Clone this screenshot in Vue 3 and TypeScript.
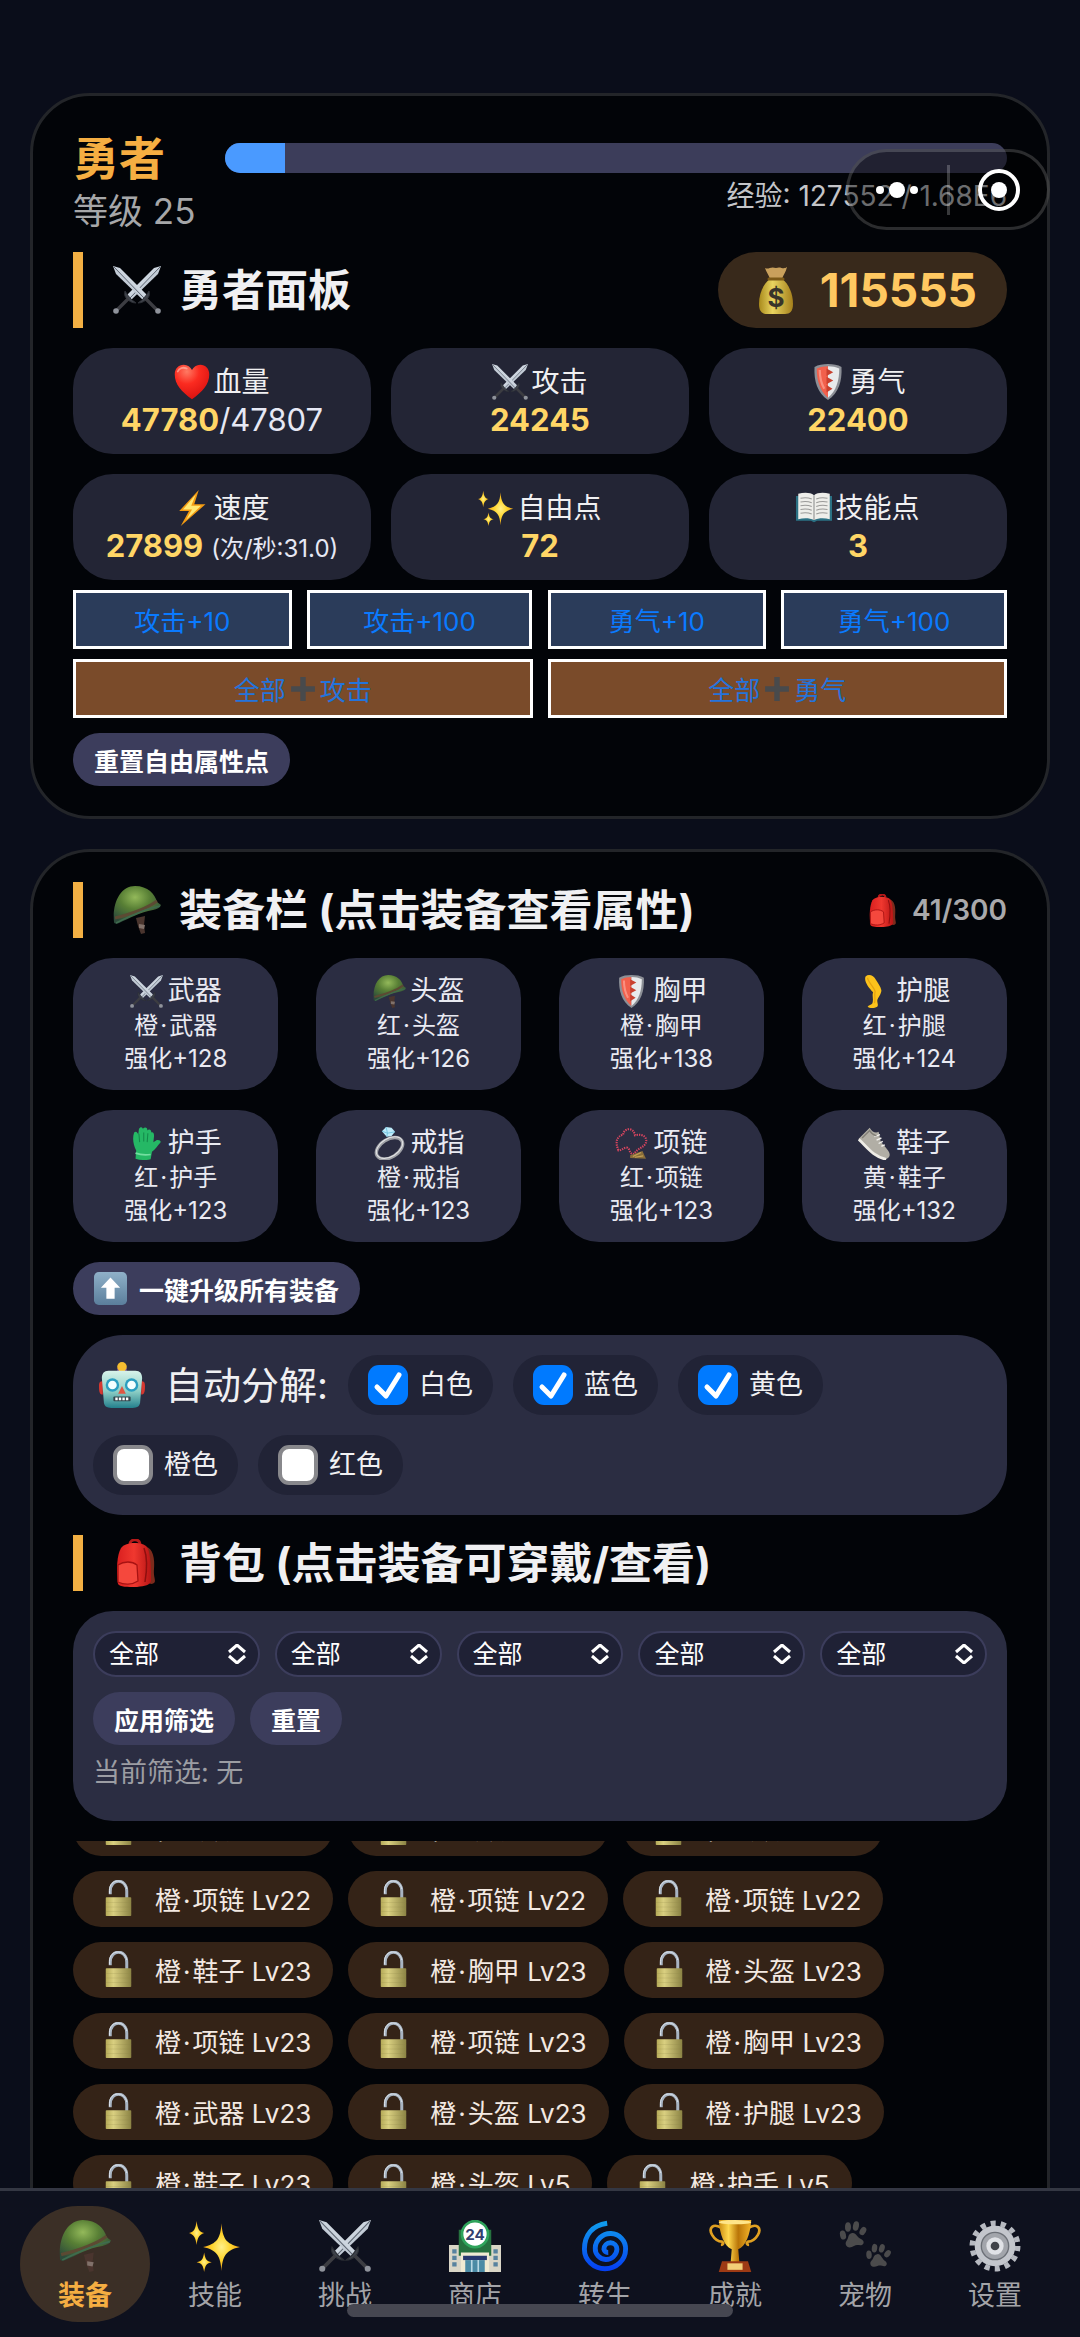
<script setup lang="ts">
import { onMounted, ref } from 'vue'

interface Stat {
  icon: string
  label: string
  value: string
  suffix?: string
  note?: string
}

interface Slot {
  icon: string
  label: string
  tier: string
  level: number
}

const exp = { percent: 7.6, text: '经验: 127552 / 1.68E6' }

const stats: Stat[] = [
  { icon: 'heart', label: '血量', value: '47780', suffix: '/47807' },
  { icon: 'swords', label: '攻击', value: '24245' },
  { icon: 'shield', label: '勇气', value: '22400' },
  { icon: 'bolt', label: '速度', value: '27899', note: '(次/秒:31.0)' },
  { icon: 'sparkles', label: '自由点', value: '72' },
  { icon: 'book', label: '技能点', value: '3' },
]

const pointGroups = [
  { name: '攻击', steps: [10, 100] },
  { name: '勇气', steps: [10, 100] },
]

const slots: Slot[] = [
  { icon: 'swords', label: '武器', tier: '橙', level: 128 },
  { icon: 'helmet', label: '头盔', tier: '红', level: 126 },
  { icon: 'shield', label: '胸甲', tier: '橙', level: 138 },
  { icon: 'leg', label: '护腿', tier: '红', level: 124 },
  { icon: 'glove', label: '护手', tier: '红', level: 123 },
  { icon: 'ring', label: '戒指', tier: '橙', level: 123 },
  { icon: 'beads', label: '项链', tier: '红', level: 123 },
  { icon: 'shoe', label: '鞋子', tier: '黄', level: 132 },
]

const autoSell = ref([
  { label: '白色', on: true },
  { label: '蓝色', on: true },
  { label: '黄色', on: true },
  { label: '橙色', on: false },
  { label: '红色', on: false },
])

const filters = ref(['全部', '全部', '全部', '全部', '全部'])

const bag: string[] = [
  '项链 Lv22', '项链 Lv22', '项链 Lv22',
  '项链 Lv22', '项链 Lv22', '项链 Lv22',
  '鞋子 Lv23', '胸甲 Lv23', '头盔 Lv23',
  '项链 Lv23', '项链 Lv23', '胸甲 Lv23',
  '武器 Lv23', '头盔 Lv23', '护腿 Lv23',
  '鞋子 Lv23', '头盔 Lv5', '护手 Lv5',
]

const tabs = [
  { icon: 'helmet', label: '装备' },
  { icon: 'sparkles', label: '技能' },
  { icon: 'swords', label: '挑战' },
  { icon: 'shop', label: '商店' },
  { icon: 'cyclone', label: '转生' },
  { icon: 'trophy', label: '成就' },
  { icon: 'paws', label: '宠物' },
  { icon: 'gear', label: '设置' },
]
const activeTab = ref('装备')

const bagList = ref<HTMLElement | null>(null)
onMounted(() => {
  if (bagList.value) bagList.value.scrollTop = 41
})
</script>

<template>
  <svg class="sprite" aria-hidden="true">
    <defs>
      <linearGradient id="g-blade" x1="0" y1="1" x2="1" y2="0">
        <stop offset="0" stop-color="#7e8894" /><stop offset=".5" stop-color="#c9d2dc" /><stop offset="1" stop-color="#f4f7fa" />
      </linearGradient>
      <radialGradient id="g-helmet" cx=".45" cy=".3" r=".7">
        <stop offset="0" stop-color="#93b95a" /><stop offset=".45" stop-color="#587f35" /><stop offset="1" stop-color="#2c4a3a" />
      </radialGradient>
      <radialGradient id="g-heart" cx=".35" cy=".2" r=".9">
        <stop offset="0" stop-color="#ff7a63" /><stop offset=".4" stop-color="#fb2b20" /><stop offset="1" stop-color="#d30d0d" />
      </radialGradient>
      <linearGradient id="g-gold" x1="0" x2="1">
        <stop offset="0" stop-color="#c98a10" /><stop offset=".3" stop-color="#ffd84d" /><stop offset=".6" stop-color="#b97508" /><stop offset="1" stop-color="#f4b52b" />
      </linearGradient>
      <linearGradient id="g-bag" x1="0" x2="1">
        <stop offset="0" stop-color="#a98a1c" /><stop offset=".4" stop-color="#e9d460" /><stop offset="1" stop-color="#a5801c" />
      </linearGradient>
      <linearGradient id="g-lock" x1="0" x2="1">
        <stop offset="0" stop-color="#b5aa58" /><stop offset=".3" stop-color="#d9cf80" /><stop offset="1" stop-color="#8b8344" />
      </linearGradient>
      <linearGradient id="g-robot" x1="0" y1="0" x2="0" y2="1">
        <stop offset="0" stop-color="#d8f3ea" /><stop offset=".55" stop-color="#8ecfc6" /><stop offset="1" stop-color="#237f8c" />
      </linearGradient>
      <linearGradient id="g-cyclone" x1="0" y1="0" x2="0" y2="1">
        <stop offset="0" stop-color="#109bec" /><stop offset="1" stop-color="#0541f2" />
      </linearGradient>
      <linearGradient id="g-up" x1="0" y1="0" x2="0" y2="1">
        <stop offset="0" stop-color="#8fb0c8" /><stop offset="1" stop-color="#5b7f9c" />
      </linearGradient>
      <linearGradient id="g-red" x1="0" x2="1">
        <stop offset="0" stop-color="#d91f1f" /><stop offset=".5" stop-color="#f0382f" /><stop offset="1" stop-color="#b81515" />
      </linearGradient>
      <radialGradient id="g-star">
        <stop offset="0" stop-color="#fff08a" /><stop offset=".5" stop-color="#ffd52e" /><stop offset="1" stop-color="#f0a417" />
      </radialGradient>
      <g id="p-sword">
        <path d="M0 0 7 2 34 29 30 34 3 8Z" fill="url(#g-blade)" />
        <path d="M1 1 31 32" stroke="#5c6470" stroke-width="1" />
        <path d="M36 25c1 4 0 6-2 8s-5 4-9 4c2-2 3-2 5-4s4-5 6-8Z" fill="#3f434b" stroke="#2c2f35" stroke-width="1" />
        <path d="m33 33 11 11" stroke="#3c3d42" stroke-width="3.400" />
        <circle cx="45" cy="45" r="2.800" fill="#8f939b" />
      </g>
      <g id="p-paw" fill="#4b4b4c">
        <ellipse cx="4" cy="14" rx="3" ry="4.600" transform="rotate(-12 4 14)" />
        <ellipse cx="9" cy="6" rx="3" ry="4.800" />
        <ellipse cx="17" cy="5" rx="3" ry="4.800" transform="rotate(10 17 5)" />
        <ellipse cx="24" cy="10" rx="3" ry="4.400" transform="rotate(30 24 10)" />
        <path d="M13 12c4-1 5 4 9 6s3 5 1 6-5-1-8 1-7 2-8-1 1-4 2-7 1-4 4-5Z" />
      </g>
    </defs>

    <symbol id="i-swords" viewBox="0 0 48 48">
      <use href="#p-sword" transform="translate(48 0) scale(-1 1)" />
      <use href="#p-sword" />
    </symbol>
    <symbol id="i-heart" viewBox="0 0 48 48">
      <path d="M24 47C10 37 1 27 1 14 1 6 6 1 13 1c5 0 9 3 11 7 2-4 6-7 11-7 7 0 12 5 12 13 0 13-9 23-23 33Z" fill="url(#g-heart)" />
      <path d="M5 10c2-5 7-6 12-4" stroke="#ffb5a5" stroke-width="2.500" fill="none" stroke-linecap="round" opacity=".7" />
    </symbol>
    <symbol id="i-shield" viewBox="0 0 48 48">
      <path d="M24 0C31 0 37 1 42 4c1 19-4 35-18 44C10 39 5 23 6 4 11 1 17 0 24 0Z" fill="#8c8f96" />
      <path d="M24 3v42C13 36 9 22 9 6c5-2 9-3 15-3Z" fill="#f2604c" />
      <path d="M24 3v42c11-9 15-23 15-39-5-2-9-3-15-3Z" fill="#e8eaec" />
      <path d="m22 6 9 5-9 5Zm0 11 9 5-9 5Zm0 11 8 5-8 5Z" fill="#c9402f" />
      <path d="M13 8c0 10 2 18 6 25" stroke="#ffb0a4" stroke-width="3" fill="none" opacity=".6" />
    </symbol>
    <symbol id="i-bolt" viewBox="0 0 48 48">
      <path d="M33 0 7 28h13L9 48l33-29H27Z" fill="#f39b12" />
      <path d="M29 6 12 26h12l-8 14 20-19H23Z" fill="#ffe873" />
    </symbol>
    <symbol id="i-sparkles" viewBox="0 0 48 48">
      <g fill="url(#g-star)">
        <path d="M30 3c1 14 4 19 17 22-13 3-16 8-17 22-1-14-4-19-17-22C26 22 29 17 30 3Z" />
        <path d="M7 1c1 7 2 10 7 11-5 2-6 4-7 11-1-7-2-9-7-11 5-1 6-4 7-11Z" />
        <path d="M14 30c1 6 2 8 7 9-5 1-6 3-7 9-1-6-2-8-7-9 5-1 6-3 7-9Z" />
      </g>
    </symbol>
    <symbol id="i-book" viewBox="0 0 48 48">
      <path d="M0 8h48v33H28l-4 2-4-2H0Z" fill="#2b7184" />
      <path d="M3 5c8-2 16-2 21 2v33c-6-3-14-3-21-1ZM45 5c-8-2-16-2-21 2v33c6-3 14-3 21-1Z" fill="#eeeeea" />
      <path d="M6 11c5-1 10-1 15 1M6 16c5-1 10-1 15 1M6 21c5-1 10-1 15 1M6 26c5-1 10-1 15 1M6 31c5-1 10-1 15 1M42 11c-5-1-10-1-15 1M42 16c-5-1-10-1-15 1M42 21c-5-1-10-1-15 1M42 26c-5-1-10-1-15 1M42 31c-5-1-10-1-15 1" stroke="#9a9a98" stroke-width="1.600" fill="none" />
      <path d="M24 7v33" stroke="#a9aaa8" stroke-width="2" />
    </symbol>
    <symbol id="i-plus" viewBox="0 0 48 48">
      <path d="M19 2h10v17h17v10H29v17H19V29H2V19h17Z" fill="#484a4c" />
    </symbol>
    <symbol id="i-money" viewBox="0 0 48 48">
      <path d="M13 2c4 2 5-2 11 0 5-2 7 2 11-1-1 5-4 8-5 12H18c-1-4-4-7-5-11Z" fill="#c9a05c" />
      <path d="M18 13h12c7 5 11 15 11 25 0 7-3 10-8 10H15c-5 0-8-3-8-10 0-10 4-20 11-25Z" fill="url(#g-bag)" />
      <path d="M17 13h14" stroke="#7d5a18" stroke-width="3" stroke-linecap="round" />
    </symbol>
    <symbol id="i-helmet" viewBox="0 0 48 48">
      <path d="m23 32 9-2-1 9 1 8-4 1-3-8Z" fill="#4a352e" />
      <path d="m26 38 6 1-1 4-5-1Z" fill="#81716a" />
      <path d="M1 36C-1 16 8 0 22 0c13 0 20 8 22 16l4 3c-1 3-4 4-8 5-13 2-23 8-34 13-2 1-5 1-5-1Z" fill="url(#g-helmet)" />
      <path d="M2 32c12-3 30-8 42-17" stroke="#5c4a33" stroke-width="3" fill="none" />
      <path d="M3 37c12-6 28-14 44-17" stroke="#3f6b4e" stroke-width="1.600" fill="none" />
    </symbol>
    <symbol id="i-backpack" viewBox="0 0 48 48">
      <path d="M33 8c7 1 9 12 8 22s4 13-2 15l-6-1Z" fill="#7c2b1c" />
      <path d="M17 5c0-5 9-6 10 0" stroke="#b51919" stroke-width="3" fill="none" />
      <path d="M5 45C3 30 4 16 8 9c4-6 21-7 26-1 4 6 4 25 4 34-1 4-6 5-14 6-10 0-17 0-19-3Z" fill="url(#g-red)" />
      <path d="M5 26c6-4 14-4 19 0l1 16c-6 4-14 4-20 1Z" fill="#f5483d" stroke="#a81212" stroke-width="1.300" />
      <path d="M31 9c3 8 3 22 1 34" stroke="#8e0f0f" stroke-width="1.500" fill="none" />
    </symbol>
    <symbol id="i-leg" viewBox="0 0 48 48">
      <path d="M11 2c5-4 12-1 15 5 3 5 7 10 8 15 0 6-5 10-6 15 0 4 2 7 0 9-5 3-12 2-14 0 1-2 6-3 7-5 2-7-1-11 1-16C16 19 8 9 11 2Z" fill="#fcc21b" />
      <path d="M14 4c0 6 9 13 11 20-2 6 1 10-1 17" stroke="#dd970c" stroke-width="1.800" fill="none" opacity=".7" />
    </symbol>
    <symbol id="i-glove" viewBox="0 0 48 48">
      <path d="M6 8c3-3 5 0 6 3l1-8c2-4 6-3 6 1V2c3-3 7-1 6 3 3-3 6-1 6 3 3-1 4 2 4 5l-1 9 5-3c4-1 7 2 5 4-4 4-7 10-12 13l-2 11c-8 2-15 1-22-1l1-12C5 26 3 17 6 8Z" fill="#25b865" />
      <path d="m13 10 1 12m6-14v13m6-12-1 13" stroke="#13884a" stroke-width="1.500" />
      <path d="M8 38c8 3 15 3 22 2" stroke="#73dfa0" stroke-width="2.500" fill="none" />
    </symbol>
    <symbol id="i-ring" viewBox="0 0 48 48">
      <ellipse cx="24" cy="31" rx="21" ry="13" transform="rotate(-32 24 31)" fill="none" stroke="#9fa1a6" stroke-width="5" />
      <ellipse cx="24" cy="30" rx="21" ry="13" transform="rotate(-32 24 30)" fill="none" stroke="#e2e3e5" stroke-width="1.500" />
      <path d="m13 6 6-6 8 1 5 6-5 6-7 1Z" fill="#bdebfa" />
      <path d="m13 6 8 3 11-2m-13-7 2 9-1 5" stroke="#6bbfdc" stroke-width="1.200" fill="none" />
    </symbol>
    <symbol id="i-beads" viewBox="0 0 48 48">
      <path d="M5 34C0 22 2 14 12 11c0-9 15-12 17 1 12-3 20 4 15 13-5 6-11 6-16 14-8 2-6-10-11-9-5 0-6 4-12 4Z" fill="none" stroke="#d8455f" stroke-width="3" stroke-dasharray="2 1.500" />
      <path d="m22 41 18-6 5 11-23-1Z" fill="#896d39" />
      <path d="m26 43 12-6m-9 7 12-2" stroke="#c4a155" stroke-width="1.500" />
    </symbol>
    <symbol id="i-shoe" viewBox="0 0 48 48">
      <path d="M1 17 17 1c4 7 9 8 13 6l3 14 9 11c6 7 5 12 0 14-6 1-16-5-22-12L3 21c-2-1-2-3-2-4Z" fill="#b1aea5" />
      <path d="M1 18c12 11 21 25 40 29" stroke="#eeece6" stroke-width="4" fill="none" />
      <path d="m24 14 8-3m-5 8 7-3m-4 8 6-3m-2 7 5-2" stroke="#f2f1ee" stroke-width="2" />
      <path d="M6 16 17 5c3 6 7 7 10 8" stroke="#827f77" stroke-width="2" fill="none" />
    </symbol>
    <symbol id="i-up" viewBox="0 0 48 48">
      <rect width="48" height="48" rx="7" fill="url(#g-up)" />
      <path d="m24 8 14 15h-8v16H18V23h-8Z" fill="#fff" />
    </symbol>
    <symbol id="i-robot" viewBox="0 0 48 48">
      <path d="M0 25c0-4 1-5 4-5v14c-3 0-4-2-4-9Zm48 0c0-4-1-5-4-5v14c3 0 4-2 4-9Z" fill="#d53830" />
      <path d="M19 6h10v5H19Z" fill="#764a9b" />
      <circle cx="24" cy="5" r="5" fill="#f5bd30" />
      <path d="M10 9h28c5 0 7 3 7 8l-2 24c0 5-3 7-8 7H13c-5 0-8-2-8-7L3 17c0-5 2-8 7-8Z" fill="url(#g-robot)" />
      <circle cx="14" cy="24" r="7" fill="#2a9ec0" /><circle cx="34" cy="24" r="7" fill="#2a9ec0" />
      <circle cx="14" cy="24" r="4.500" fill="#f4ffff" /><circle cx="34" cy="24" r="4.500" fill="#f4ffff" />
      <path d="m24 25 4 8h-8Z" fill="#e05643" />
      <rect x="15" y="36" width="18" height="5" rx="1" fill="#33464d" />
      <path d="M17 38.500h14" stroke="#fff" stroke-width="3" stroke-dasharray="2.500 1.200" />
    </symbol>
    <symbol id="i-lock" viewBox="0 0 36 48">
      <path d="M7 19v-4c0-18 22-18 22 0v9" fill="none" stroke="#a8b4c2" stroke-width="4" />
      <path d="M6 18v-4C6-3 27-2 29 12" fill="none" stroke="#e0e6ee" stroke-width="1.200" />
      <rect x="1" y="23" width="34" height="25" rx="1" fill="url(#g-lock)" />
      <path d="M1 30h34M1 36h34M1 42h34" stroke="#8d8548" stroke-width=".8" opacity=".3" />
    </symbol>
    <symbol id="i-shop" viewBox="0 0 48 48">
      <path d="M0 23h14v25H0ZM34 23h14v25H34Z" fill="#d9d6c7" />
      <path d="M9 9h30v24H9Z" fill="#26713f" />
      <path d="M11 30h26v18H11Z" fill="#f0ead2" />
      <path d="M13 33h22v4H13Z" fill="#28386e" />
      <path d="M15 37h18v11H15Z" fill="#4b8ba5" />
      <path d="M21 37v11m6-11v11" stroke="#b9d9e4" stroke-width="1.500" />
      <path d="M3 27h4v4H3Zm0 6h4v4H3Zm0 6h4v4H3Zm38-12h4v4h-4Zm0 6h4v4h-4Zm0 6h4v4h-4Z" fill="#57829f" />
      <circle cx="24" cy="13" r="12" fill="#fff" stroke="#2ea35b" stroke-width="2.500" />
    </symbol>
    <symbol id="i-cyclone" viewBox="0 0 48 48">
      <path d="M26 3C12 5 5 14 5 27a19 18 0 0 0 38 0 14 14 0 0 0-28-1 10 10 0 0 0 20 1 6 6 0 0 0-12 0 4 4 0 0 0 4 3" fill="none" stroke="url(#g-cyclone)" stroke-width="4.500" />
    </symbol>
    <symbol id="i-trophy" viewBox="0 0 48 48">
      <path d="M11 7C4 3-1 7 3 14c3 5 6 6 9 6 2 1 1 3-1 3M37 7c7-4 12 0 8 7-3 5-6 6-9 6-2 1-1 3 1 3" fill="none" stroke="#e0a021" stroke-width="2.500" />
      <path d="M9 0h30c-1 14-5 24-12 27l1 12h-8l1-12C14 24 10 14 9 0Z" fill="url(#g-gold)" />
      <ellipse cx="24" cy="2" rx="15" ry="2" fill="#ffe589" />
      <path d="m12 38 24 0 3 10H9Z" fill="#9d3a14" />
      <path d="M17 40h14v6H17Z" fill="#f3cf78" />
    </symbol>
    <symbol id="i-paws" viewBox="0 0 48 48">
      <use href="#p-paw" transform="translate(0 1) scale(.92)" />
      <use href="#p-paw" transform="translate(26 20) rotate(8) scale(.84)" />
    </symbol>
    <symbol id="i-gear" viewBox="0 0 48 48">
      <circle cx="24" cy="24" r="21" fill="none" stroke="#b6b9c0" stroke-width="5" stroke-dasharray="4.713 4.713" />
      <circle cx="24" cy="24" r="16" fill="#6c7077" stroke="#c3c6cc" stroke-width="5.500" />
      <circle cx="24" cy="24" r="12" fill="#a2a5ab" />
      <circle cx="24" cy="24" r="6" fill="#404349" stroke="#e0e2e6" stroke-width="4" />
    </symbol>
  </svg>

  <div class="app">
    <main class="content">
      <section class="card">
        <header class="hero">
          <div>
            <div class="hero-name">勇者</div>
            <div class="hero-level">等级 25</div>
          </div>
          <div class="hero-exp">
            <div class="track"><div class="fill" :style="{ width: exp.percent + '%' }"></div></div>
            <div class="exp-text">{{ exp.text }}</div>
          </div>
        </header>

        <div class="heading">
          <h2><svg class="ico-title"><use href="#i-swords" /></svg>勇者面板</h2>
          <div class="gold">
            <svg class="ico-title" viewBox="0 0 48 48">
              <use href="#i-money" />
              <text x="24" y="41" text-anchor="middle" font-size="26" font-weight="700" fill="#38342a">$</text>
            </svg>
            115555
          </div>
        </div>

        <div class="stats">
          <div v-for="s in stats" :key="s.label" class="stat">
            <div class="stat-label"><svg class="ico-stat"><use :href="'#i-' + s.icon" /></svg>{{ s.label }}</div>
            <div class="stat-value"><b>{{ s.value }}</b>{{ s.suffix }}<small v-if="s.note">{{ s.note }}</small></div>
          </div>
        </div>

        <div class="points">
          <div v-for="g in pointGroups" :key="g.name" class="point-group">
            <div class="steps">
              <button v-for="n in g.steps" :key="n" type="button" class="point">{{ g.name }}+{{ n }}</button>
            </div>
            <button type="button" class="point all">全部<svg class="ico-plus"><use href="#i-plus" /></svg>{{ g.name }}</button>
          </div>
        </div>

        <button type="button" class="pill reset">重置自由属性点</button>
      </section>

      <section class="card bag-card">
        <div class="heading slim">
          <h2><svg class="ico-title"><use href="#i-helmet" /></svg>装备栏 (点击装备查看属性)</h2>
          <div class="count"><svg class="ico-small"><use href="#i-backpack" /></svg>41/300</div>
        </div>

        <div class="slots">
          <button v-for="s in slots" :key="s.label" type="button" class="slot">
            <span class="slot-label"><svg class="ico-small"><use :href="'#i-' + s.icon" /></svg>{{ s.label }}</span>
            <span>{{ s.tier }}<span class="dot">·</span>{{ s.label }}</span>
            <span>强化+{{ s.level }}</span>
          </button>
        </div>

        <button type="button" class="pill upgrade"><svg class="ico-small"><use href="#i-up" /></svg>一键升级所有装备</button>

        <div class="auto">
          <span class="auto-title"><svg class="ico-robot"><use href="#i-robot" /></svg>自动分解:</span>
          <label v-for="c in autoSell" :key="c.label" class="chip">
            <span class="tick">
              <input v-model="c.on" type="checkbox" />
              <svg v-if="c.on" viewBox="0 0 40 40"><path d="m9 22 9 9L31 10" /></svg>
            </span>
            {{ c.label }}
          </label>
        </div>

        <div class="heading slim">
          <h2><svg class="ico-title"><use href="#i-backpack" /></svg>背包 (点击装备可穿戴/查看)</h2>
        </div>

        <div class="filter">
          <div class="selects">
            <label v-for="(f, i) in filters" :key="i" class="select">
              <select v-model="filters[i]" :aria-label="'筛选 ' + (i + 1)">
                <option>全部</option>
              </select>
              <svg viewBox="0 0 18 20"><path d="m1 8 8-7 8 7M1 12l8 7 8-7" /></svg>
            </label>
          </div>
          <div class="filter-actions">
            <button type="button" class="pill">应用筛选</button>
            <button type="button" class="pill">重置</button>
          </div>
          <p>当前筛选: 无</p>
        </div>

        <div ref="bagList" class="bag">
          <button v-for="(b, i) in bag" :key="i" type="button" class="item">
            <svg class="ico-lock"><use href="#i-lock" /></svg>
            <span>橙<span class="dot">·</span>{{ b }}</span>
          </button>
        </div>
      </section>
    </main>

    <nav class="tabs">
      <button
        v-for="t in tabs"
        :key="t.label"
        type="button"
        class="tab"
        :class="{ active: t.label === activeTab }"
        @click="activeTab = t.label"
      >
        <svg class="ico-tab" viewBox="0 0 48 48">
          <use :href="'#i-' + t.icon" />
          <text v-if="t.icon === 'shop'" x="24" y="18" text-anchor="middle" font-size="14" font-weight="700" fill="#34406f">24</text>
        </svg>
        {{ t.label }}
      </button>
      <div class="home-bar"></div>
    </nav>

    <div class="capsule">
      <svg class="dots" viewBox="0 0 42 16"><circle cx="4" cy="8" r="4" /><circle cx="21" cy="8" r="8" /><circle cx="38" cy="8" r="4" /></svg>
      <span class="divider"></span>
      <svg class="target" viewBox="0 0 42 42"><circle cx="21" cy="21" r="19" /><circle cx="21" cy="21" r="8" class="core" /></svg>
    </div>
  </div>
</template>

<style>
body {
  margin: 0;
  background: #0a0d1a;
}
</style>

<style scoped>
.sprite {
  position: absolute;
  width: 0;
  height: 0;
}
.app,
.app button,
.app select {
  font-family: Inter, "Noto Sans CJK SC", sans-serif;
}
.app {
  position: relative;
  height: 100vh;
  display: flex;
  flex-direction: column;
  overflow: hidden;
  color: #f0f0f2;
  background: #0a0d1a;
}
.app *,
.app {
  box-sizing: border-box;
}
button {
  margin: 0;
  border: 0;
  color: inherit;
  cursor: pointer;
}
svg {
  flex: none;
  display: block;
}
.content {
  flex: 1;
  min-height: 0;
  display: flex;
  flex-direction: column;
  gap: 30px;
  padding: 93px 30px 0;
}
.card {
  flex: none;
  padding: 30px 40px;
  border: 3px solid #232529;
  border-radius: 60px;
  background: #020408;
}
.bag-card {
  flex: 1;
  min-height: 0;
  display: flex;
  flex-direction: column;
  gap: 20px;
  padding-bottom: 0;
  border-bottom: 0;
  border-radius: 60px 60px 0 0;
}

.hero {
  display: flex;
  align-items: center;
  gap: 30px;
  margin-bottom: 20px;
}
.hero-name {
  font-size: 46px;
  line-height: 64px;
  font-weight: 700;
  color: #f5ae42;
}
.hero-level {
  font-size: 35px;
  line-height: 42px;
  color: #a6a7a9;
}
.hero-exp {
  flex: 1;
}
.track {
  height: 30px;
  border-radius: 15px;
  overflow: hidden;
  background: #3c3d5a;
}
.fill {
  height: 100%;
  background: #4a9aff;
}
.exp-text {
  margin-top: 4px;
  text-align: right;
  font-size: 28px;
  line-height: 38px;
  color: #c4c5c8;
}

.heading {
  flex: none;
  display: flex;
  align-items: center;
  justify-content: space-between;
  min-height: 76px;
  padding-left: 30px;
  border-left: 10px solid #f3b043;
}
.heading.slim {
  min-height: 56px;
}
h2 {
  display: flex;
  align-items: center;
  gap: 18px;
  margin: 0;
  font-size: 43px;
  line-height: 56px;
  font-weight: 700;
}
.ico-title {
  width: 48px;
  height: 48px;
}
.gold {
  display: flex;
  align-items: center;
  gap: 20px;
  height: 76px;
  padding: 0 30px 0 34px;
  border-radius: 38px;
  font-size: 46px;
  font-weight: 700;
  color: #ffc861;
  background: #38291b;
}
.count {
  display: flex;
  align-items: center;
  gap: 12px;
  font-size: 28px;
  font-weight: 600;
  color: #a9a9ab;
}
.ico-small {
  width: 33px;
  height: 33px;
}

.stats {
  display: grid;
  grid-template-columns: repeat(3, 1fr);
  gap: 20px;
  margin-top: 20px;
}
.stat {
  padding: 15px 10px;
  border-radius: 40px;
  text-align: center;
  background: #232535;
}
.stat-label {
  display: flex;
  align-items: center;
  justify-content: center;
  gap: 3px;
  font-size: 28px;
  line-height: 38px;
}
.ico-stat {
  width: 36px;
  height: 36px;
}
.stat-value {
  height: 38px;
  font-size: 31px;
  line-height: 38px;
  color: #e6e8f4;
}
.stat-value b {
  color: #ffd666;
}
.stat-value small {
  margin-left: 8px;
  font-size: 24px;
}

.points {
  display: flex;
  gap: 15px;
  margin-top: 10px;
}
.point-group {
  flex: 1;
  display: flex;
  flex-direction: column;
  gap: 10px;
}
.steps {
  display: grid;
  grid-template-columns: 31fr 32fr;
  gap: 15px;
}
.point {
  display: flex;
  align-items: center;
  justify-content: center;
  height: 59px;
  padding: 0;
  border: 3px solid #fff;
  font-size: 26px;
  color: #0a7aff;
  background: #2b3c5a;
}
.point.all {
  gap: 4px;
  color: #2474dc;
  background: #7a4b2a;
}
.ico-plus {
  width: 26px;
  height: 26px;
}
.pill {
  display: flex;
  align-items: center;
  gap: 12px;
  height: 53px;
  padding: 0 21px;
  border-radius: 27px;
  font-size: 25px;
  font-weight: 700;
  color: #fff;
  background: #3c3d5c;
}
.reset {
  margin-top: 15px;
}
.upgrade {
  align-self: flex-start;
}

.slots {
  display: grid;
  grid-template-columns: repeat(4, 22%);
  justify-content: space-between;
  row-gap: 20px;
}
.slot {
  display: flex;
  flex-direction: column;
  align-items: center;
  padding: 15px 10px;
  border-radius: 40px;
  font-size: 24px;
  line-height: 33px;
  color: #e9eaf2;
  background: #2b2d42;
}
.slot-label {
  display: flex;
  align-items: center;
  gap: 5px;
  font-size: 27px;
  line-height: 36px;
}
.dot {
  margin: 0 2px;
}

.auto {
  display: flex;
  flex-wrap: wrap;
  align-items: center;
  gap: 20px;
  padding: 20px;
  border-radius: 50px;
  background: #2b2d42;
}
.auto-title {
  display: flex;
  align-items: center;
  gap: 20px;
  padding-left: 6px;
  font-size: 38px;
  line-height: 60px;
}
.ico-robot {
  width: 46px;
  height: 46px;
}
.chip {
  display: flex;
  align-items: center;
  gap: 11px;
  padding: 10px 20px;
  border-radius: 30px;
  font-size: 27px;
  line-height: 40px;
  background: #212336;
}
.tick {
  display: grid;
}
.tick input,
.tick svg {
  grid-area: 1 / 1;
  width: 40px;
  height: 40px;
  margin: 0;
}
.tick input {
  appearance: none;
  border: 4px solid #88888c;
  border-radius: 11px;
  background: #fff;
}
.tick input:checked {
  border: 0;
  background: #007aff;
}
.tick svg {
  pointer-events: none;
  fill: none;
  stroke: #fff;
  stroke-width: 5;
  stroke-linecap: round;
  stroke-linejoin: round;
}

.filter {
  display: flex;
  flex-direction: column;
  padding: 20px;
  border-radius: 40px;
  background: #2b2d42;
}
.selects {
  display: flex;
  gap: 15px;
}
.select {
  position: relative;
  flex: 1;
}
.select select {
  display: block;
  appearance: none;
  width: 100%;
  height: 46px;
  padding: 0 14px;
  border: 2px solid #3c3d5c;
  border-radius: 23px;
  font-size: 25px;
  color: #fff;
  background: #1f2135;
}
.select svg {
  position: absolute;
  top: 13px;
  right: 14px;
  width: 18px;
  height: 20px;
  pointer-events: none;
  fill: none;
  stroke: #fff;
  stroke-width: 3;
}
.filter-actions {
  display: flex;
  gap: 15px;
  margin-top: 15px;
}
.filter p {
  margin: 10px 0;
  font-size: 27px;
  line-height: 36px;
  color: #9c9da3;
}

.bag {
  flex: 1;
  min-height: 0;
  display: flex;
  flex-wrap: wrap;
  align-content: flex-start;
  gap: 15px;
  overflow-y: auto;
  scrollbar-width: none;
}
.item {
  display: flex;
  align-items: center;
  gap: 23px;
  height: 56px;
  padding: 0 22px 2px 32px;
  border-radius: 28px;
  font-size: 26px;
  color: #f3e9e2;
  background: #342317;
}
.ico-lock {
  width: 27px;
  height: 36px;
}

.tabs {
  position: relative;
  flex: none;
  display: flex;
  padding: 15px 20px;
  border-top: 3px solid #343743;
  background: #0e111e;
}
.tab {
  flex: 1;
  display: flex;
  flex-direction: column;
  align-items: center;
  gap: 5px;
  height: 116px;
  padding: 14px 0 0;
  border-radius: 58px;
  font-size: 27px;
  line-height: 38px;
  color: #a3a4a8;
  background: none;
}
.tab.active {
  font-weight: 700;
  color: #f5ae42;
  background: #3b2f26;
}
.ico-tab {
  width: 52px;
  height: 52px;
}
.home-bar {
  position: absolute;
  left: 50%;
  bottom: 20px;
  width: 386px;
  height: 13px;
  margin-left: -193px;
  border-radius: 7px;
  background: #464751;
}

.capsule {
  position: absolute;
  top: 149px;
  right: 30px;
  display: flex;
  align-items: center;
  justify-content: space-between;
  width: 204px;
  height: 81px;
  padding: 0 27px;
  border: 3px solid rgba(255, 255, 255, 0.17);
  border-radius: 41px;
  background: rgba(0, 0, 0, 0.45);
}
.dots {
  width: 42px;
  height: 16px;
  fill: #fff;
}
.divider {
  width: 3px;
  height: 50px;
  background: rgba(255, 255, 255, 0.22);
}
.target {
  width: 42px;
  height: 42px;
  fill: none;
  stroke: #fff;
  stroke-width: 4;
}
.core {
  fill: #fff;
  stroke: none;
}
</style>
